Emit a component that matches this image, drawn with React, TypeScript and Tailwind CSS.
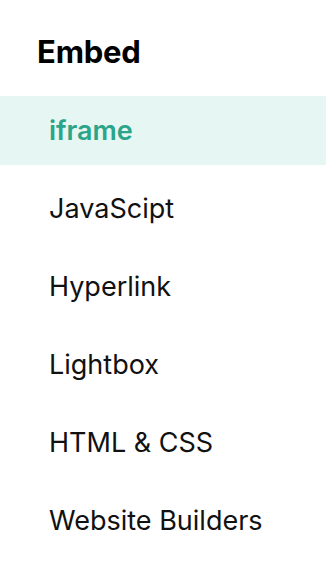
import React from "react";

const items = ["iframe", "JavaScipt", "Hyperlink", "Lightbox", "HTML & CSS", "Website Builders"];

export default function App() {
  return (
    <div className="w-[326px] h-[582px] bg-white overflow-hidden" style={{ fontFamily: "Inter, 'Noto Sans', sans-serif" }}>
      <div className="h-[96px] pl-[37px] pt-[33px]">
        <h1 className="text-[31px] leading-[38px] font-bold text-black tracking-[-0.2px]">Embed</h1>
      </div>
      <div className="flex flex-col gap-[9px]">
        {items.map((it, i) => (
          <div
            key={it}
            className={
              i === 0
                ? "h-[69px] flex items-center pl-[49px] pt-[2px] bg-[#e6f6f2] text-[#2aa58a] font-semibold text-[27px]"
                : "h-[69px] flex items-center pl-[49px] pt-[2px] text-[#111111] text-[27px]"
            }
          >
            {it}
          </div>
        ))}
      </div>
    </div>
  );
}
